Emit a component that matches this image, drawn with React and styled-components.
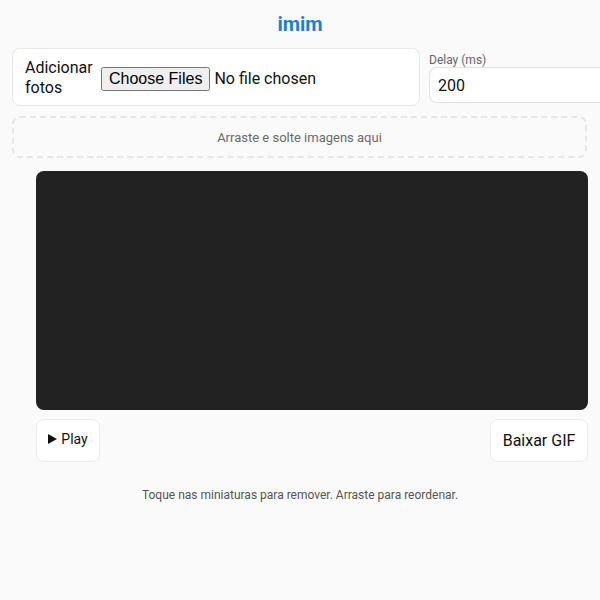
import React from "react";
import styled, { createGlobalStyle } from "styled-components";

const GlobalStyle = createGlobalStyle`
  html, body {
    margin: 0;
    padding: 0;
    background: #fafafa;
    overflow-x: hidden;
  }
  body {
    font-family: Roboto, "Noto Sans", Arial, sans-serif;
    color: #111;
  }
`;

const Page = styled.main`
  padding: 0 12px;
`;

const Title = styled.h1`
  margin: 0;
  height: 48px;
  line-height: 48px;
  text-align: center;
  font-size: 20px;
  font-weight: 700;
  color: #1a7fd8;
`;

const Toolbar = styled.div`
  display: flex;
  align-items: flex-start;
  gap: 9px;
  margin-right: -12px;
`;

const Card = styled.div`
  flex: 0 0 406px;
  box-sizing: border-box;
  height: 58px;
  display: flex;
  align-items: center;
  gap: 8px;
  padding: 1px 12px 0;
  background: #fff;
  border: 1px solid #e8e8e8;
  border-radius: 8px;
`;

const FileLabel = styled.label`
  font-size: 16px;
  line-height: 20px;
  width: 68px;
`;

const FileInput = styled.input`
  font-family: Roboto, Arial, sans-serif;
  font-size: 16px;
  color: #111;
  margin-top: 3px;
`;

const Field = styled.div`
  display: flex;
  flex-direction: column;
  flex: 1 1 auto;
  min-width: 0;
  padding-top: 5px;
`;

const FieldLabel = styled.span`
  font-size: 12px;
  line-height: 14px;
  color: #666;
`;

const NumberInput = styled.input`
  box-sizing: border-box;
  width: 100%;
  height: 36px;
  padding: 0 8px;
  border: 1px solid #e3e3e3;
  border-right: none;
  border-radius: 8px 0 0 8px;
  background: #fff;
  font-family: Roboto, Arial, sans-serif;
  font-size: 16px;
  color: #111;
  outline: none;
`;

const DropZone = styled.div`
  box-sizing: border-box;
  margin-top: 10px;
  height: 42px;
  width: 575px;
  display: flex;
  align-items: center;
  justify-content: center;
  border: 2px dashed #e6e6e6;
  border-radius: 8px;
  font-size: 13px;
  color: #6a6a6a;
`;

const Stage = styled.section`
  padding-left: 24px;
  margin-top: 13px;
`;

const Canvas = styled.div`
  height: 239px;
  background: #222;
  border-radius: 8px;
`;

const Actions = styled.div`
  display: flex;
  justify-content: space-between;
  align-items: flex-start;
  margin-top: 9px;
`;

const Button = styled.button`
  box-sizing: border-box;
  height: 43px;
  width: ${(p) => p.$width}px;
  padding: 0;
  background: #fff;
  border: 1px solid #ececec;
  border-radius: 8px;
  font-family: Roboto, Arial, sans-serif;
  font-size: ${(p) => p.$size}px;
  color: #111;
  display: flex;
  align-items: center;
  justify-content: center;
  gap: 4px;
`;

const PlayIcon = styled.span`
  width: 0;
  height: 0;
  margin-top: 3px;
  border-top: 5px solid transparent;
  border-bottom: 5px solid transparent;
  border-left: 9px solid #111;
`;

const PlayButton = styled(Button)`
  align-items: flex-start;
  padding-top: 11px;
`;

const Hint = styled.p`
  margin: 26px 0 0;
  text-align: center;
  font-size: 12px;
  color: #555;
`;

export default function App() {
  return (
    <>
      <GlobalStyle />
      <Page>
        <Title>imim</Title>
        <Toolbar>
          <Card>
            <FileLabel htmlFor="fotos">Adicionar fotos</FileLabel>
            <FileInput id="fotos" type="file" multiple accept="image/*" />
          </Card>
          <Field>
            <FieldLabel>Delay (ms)</FieldLabel>
            <NumberInput type="number" defaultValue={200} />
          </Field>
        </Toolbar>
        <DropZone>Arraste e solte imagens aqui</DropZone>
        <Stage>
          <Canvas />
          <Actions>
            <PlayButton $width={64} $size={14}>
              <PlayIcon />
              Play
            </PlayButton>
            <Button $width={98} $size={16}>Baixar GIF</Button>
          </Actions>
        </Stage>
        <Hint>Toque nas miniaturas para remover. Arraste para reordenar.</Hint>
      </Page>
    </>
  );
}
